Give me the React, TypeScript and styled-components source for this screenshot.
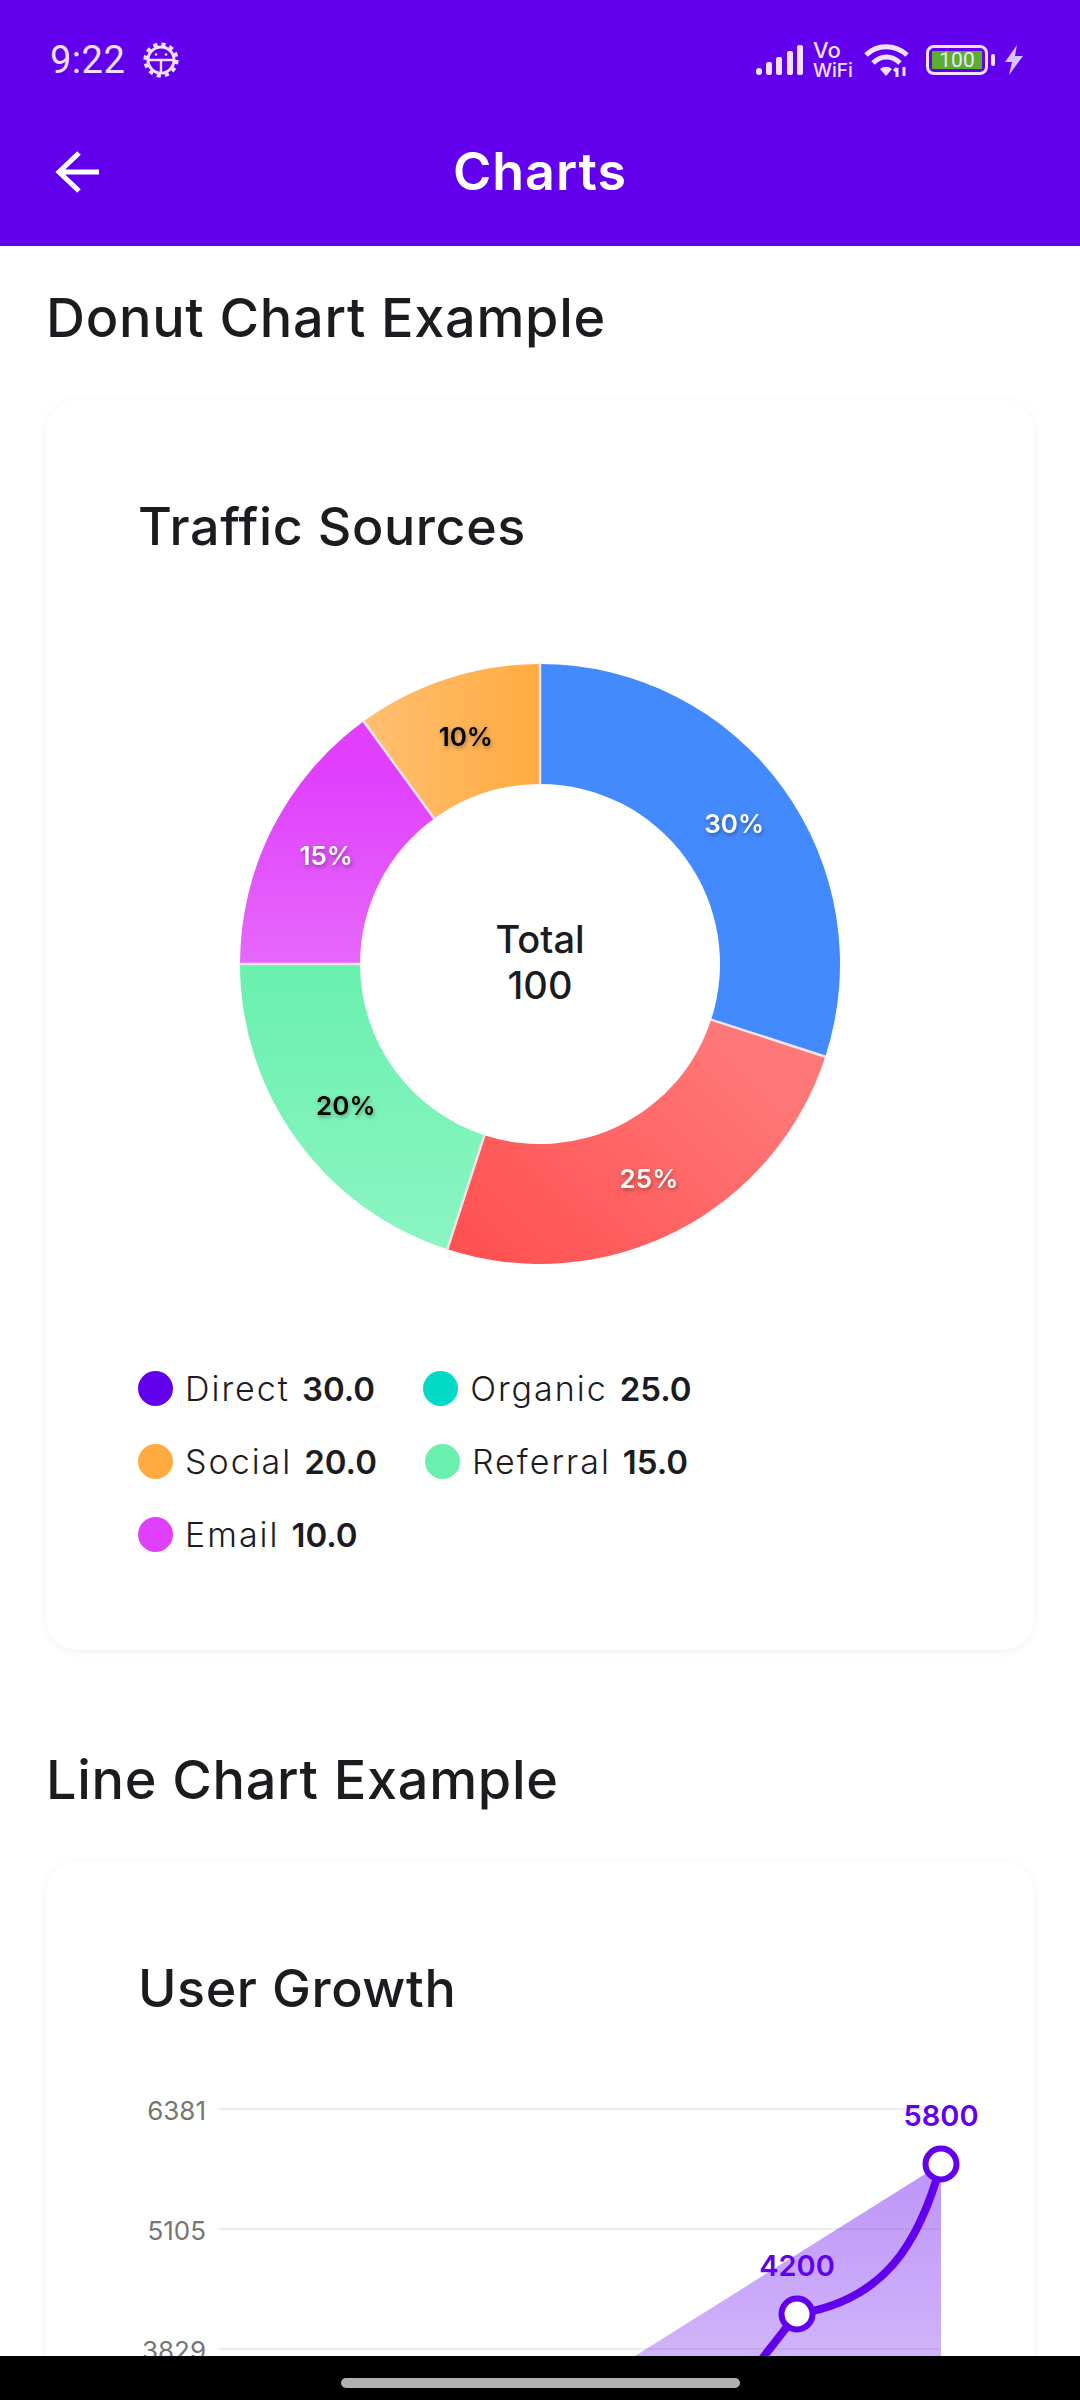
import React from 'react';
import styled, { createGlobalStyle } from 'styled-components';

const PURPLE = '#6200EE';
const INK = '#1C1B1F';

const slices = [
  { from: 0, to: 108, label: '30%', light: true, a: '#448AFF', b: '#448AFF', g: [320, 20, 620, 320] },
  { from: 108, to: 198, label: '25%', light: true, a: '#FF7878', b: '#FF5252', g: [520, 400, 300, 640] },
  { from: 198, to: 270, label: '20%', light: false, a: '#69F0AE', b: '#8CF5C2', g: [100, 320, 100, 610] },
  { from: 270, to: 324, label: '15%', light: true, a: '#E040FB', b: '#E668FC', g: [100, 130, 100, 320] },
  { from: 324, to: 360, label: '10%', light: false, a: '#FFAB40', b: '#FFBF72', g: [320, 100, 140, 100] },
];

const legend = [
  { name: 'Direct', value: '30.0', color: '#6200EE' },
  { name: 'Organic', value: '25.0', color: '#03DAC6' },
  { name: 'Social', value: '20.0', color: '#FFAB40' },
  { name: 'Referral', value: '15.0', color: '#69F0AE' },
  { name: 'Email', value: '10.0', color: '#E040FB' },
];

const polar = (r: number, deg: number) => {
  const rad = ((deg - 90) * Math.PI) / 180;
  return [320 + r * Math.cos(rad), 320 + r * Math.sin(rad)];
};

const slicePath = (from: number, to: number) => {
  const [x1, y1] = polar(300, from);
  const [x2, y2] = polar(300, to);
  const [x3, y3] = polar(180, to);
  const [x4, y4] = polar(180, from);
  const big = to - from > 180 ? 1 : 0;
  return `M${x1} ${y1}A300 300 0 ${big} 1 ${x2} ${y2}L${x3} ${y3}A180 180 0 ${big} 0 ${x4} ${y4}Z`;
};

const DonutChart = () => (
  <DonutSvg viewBox="0 0 640 640">
    <defs>
      {slices.map((s) => (
        <linearGradient
          key={s.label}
          id={`slice${s.from}`}
          gradientUnits="userSpaceOnUse"
          x1={s.g[0]}
          y1={s.g[1]}
          x2={s.g[2]}
          y2={s.g[3]}
        >
          <stop offset="0" stopColor={s.a} />
          <stop offset="1" stopColor={s.b} />
        </linearGradient>
      ))}
    </defs>
    {slices.map((s) => (
      <path key={s.label} d={slicePath(s.from, s.to)} fill={`url(#slice${s.from})`} />
    ))}
    {slices.map((s) => {
      const [x1, y1] = polar(179, s.from);
      const [x2, y2] = polar(301, s.from);
      return <line key={s.label} x1={x1} y1={y1} x2={x2} y2={y2} stroke="#F0E4EC" strokeWidth="2.5" />;
    })}
    {slices.map((s) => {
      const [x, y] = polar(240, (s.from + s.to) / 2);
      return (
        <SliceLabel key={s.label} x={x} y={y + 10} $light={s.light}>
          {s.label}
        </SliceLabel>
      );
    })}
    <CenterText x="320" y="309">Total</CenterText>
    <CenterText x="320" y="355">100</CenterText>
  </DonutSvg>
);

const LineChart = () => (
  <LineSvg viewBox="0 0 803 400">
    <defs>
      <linearGradient id="areaFill" x1="0" y1="125" x2="0" y2="360" gradientUnits="userSpaceOnUse">
        <stop offset="0" stopColor="#6200EE" stopOpacity="0.42" />
        <stop offset="1" stopColor="#6200EE" stopOpacity="0.27" />
      </linearGradient>
    </defs>
    <path d="M802 125L300 440V400H802Z" fill="url(#areaFill)" />
    {[70, 190, 310].map((y) => (
      <line key={y} x1="80" y1={y} x2="802" y2={y} stroke="#6b6b6b" strokeOpacity="0.12" strokeWidth="2" />
    ))}
    <AxisText x="67" y="81">6381</AxisText>
    <AxisText x="67" y="201">5105</AxisText>
    <AxisText x="67" y="321">3829</AxisText>
    <path
      d="M802 125C780 205 745 262 658 275M658 275L540 426"
      fill="none"
      stroke={PURPLE}
      strokeWidth="8"
    />
    <circle cx="802" cy="125" r="15.5" fill="#fff" stroke={PURPLE} strokeWidth="6" />
    <circle cx="658" cy="275" r="15.5" fill="#fff" stroke={PURPLE} strokeWidth="6" />
    <PointText x="802" y="87">5800</PointText>
    <PointText x="658" y="237">4200</PointText>
  </LineSvg>
);

const GearIcon = () => (
  <svg width="36" height="36" viewBox="0 0 36 36" fill="none" stroke="#F0E2FF">
    <circle cx="18" cy="18" r="13" strokeWidth="3" />
    <circle cx="18" cy="18" r="15.8" strokeWidth="3.6" strokeDasharray="4.2 4.07" />
    <path d="M5 18H31M18 18V31" strokeWidth="2.4" />
    <circle cx="13" cy="12.5" r="1.3" fill="#F0E2FF" stroke="none" />
    <circle cx="23" cy="12.5" r="1.3" fill="#F0E2FF" stroke="none" />
  </svg>
);

const SignalIcon = () => (
  <svg width="48" height="32" viewBox="0 0 48 32" fill="#F0E2FF">
    <rect x="0" y="24" width="6" height="7" rx="3" />
    <rect x="10" y="18" width="6" height="13" rx="2" />
    <rect x="20" y="13" width="6" height="18" rx="2" />
    <rect x="31" y="7" width="6" height="24" rx="2" />
    <rect x="41" y="1" width="6" height="30" rx="2" />
  </svg>
);

const WifiIcon = () => (
  <svg width="48" height="36" viewBox="0 0 48 36" fill="none" stroke="#F0E2FF" strokeWidth="5">
    <path d="M3 13C14 2 32 2 44 13" />
    <path d="M10 21C18 13 29 13 37 21" />
    <path d="M17 27L23 34L29 27C25 24 21 24 17 27Z" fill="#F0E2FF" stroke="none" />
    <path d="M34 35V26M31 29L34 26M41 25V34" strokeWidth="3" />
  </svg>
);

const BoltIcon = () => (
  <svg width="20" height="30" viewBox="0 0 20 30" fill="#D9C0FF">
    <path d="M13 0L1 17H8L5 30L19 11H11Z" />
  </svg>
);

const App = () => {
  return (
    <Screen>
      <GlobalStyle />
      <Header>
        <StatusBar>
          <StatusLeft>
            <Time>9:22</Time>
            <GearIcon />
          </StatusLeft>
          <StatusRight>
            <SignalIcon />
            <VoWifi>
              <VoText>Vo</VoText>
              <WifiText>WiFi</WifiText>
            </VoWifi>
            <WifiIcon />
            <Battery>
              <BatteryBody>
                <BatteryLevel>100</BatteryLevel>
              </BatteryBody>
              <BatteryCap />
            </Battery>
            <BoltIcon />
          </StatusRight>
        </StatusBar>
        <AppBar>
          <BackIcon viewBox="0 0 44 44" fill="none" stroke="#fff" strokeWidth="5">
            <path d="M44 22H4M24 3L4 22L24 41" />
          </BackIcon>
          <AppTitle>Charts</AppTitle>
        </AppBar>
      </Header>

      <MainContent>
        <SectionTitle>Donut Chart Example</SectionTitle>
        <Card>
          <CardTitle>Traffic Sources</CardTitle>
          <DonutChart />
          <Legend>
            {legend.map((item) => (
              <LegendItem key={item.name}>
                <Dot $color={item.color} />
                <LegendName>{item.name}</LegendName>
                <LegendValue>{item.value}</LegendValue>
              </LegendItem>
            ))}
          </Legend>
        </Card>

        <SectionTitle $spaced>Line Chart Example</SectionTitle>
        <Card>
          <CardTitle>User Growth</CardTitle>
          <LineChart />
        </Card>
      </MainContent>

      <NavBar>
        <NavHandle />
      </NavBar>
    </Screen>
  );
};

export default App;

// Styled Components
const GlobalStyle = createGlobalStyle`
  html, body {
    margin: 0;
    padding: 0;
    background: #fff;
  }
`;

const Screen = styled.div`
  display: flex;
  flex-direction: column;
  width: 1080px;
  height: 2400px;
  overflow: hidden;
  background: #fff;
  font-family: 'Inter', 'Liberation Sans', sans-serif;
  color: ${INK};
`;

const Header = styled.div`
  flex: none;
  background: ${PURPLE};
`;

const StatusBar = styled.div`
  display: flex;
  align-items: center;
  justify-content: space-between;
  height: 120px;
  padding: 0 56px 0 50px;
  color: #f0e2ff;
`;

const StatusLeft = styled.div`
  display: flex;
  align-items: center;
  gap: 18px;
`;

const Time = styled.span`
  font-family: 'Roboto', sans-serif;
  font-size: 38px;
  letter-spacing: 0.5px;
`;

const StatusRight = styled.div`
  display: flex;
  align-items: center;
  gap: 9px;
`;

const VoWifi = styled.div`
  display: flex;
  flex-direction: column;
  gap: 1px;
  width: 41px;
  font-family: 'Inter', sans-serif;
  font-weight: 500;
`;

const VoText = styled.span`
  font-size: 22px;
  line-height: 19px;
`;

const WifiText = styled.span`
  font-size: 19px;
  line-height: 19px;
`;

const Battery = styled.div`
  display: flex;
  align-items: center;
  gap: 3px;
  margin-left: 6px;
`;

const BatteryBody = styled.div`
  display: flex;
  width: 62px;
  height: 30px;
  padding: 3px;
  box-sizing: border-box;
  border: 3px solid #f0e2ff;
  border-radius: 8px;
`;

const BatteryLevel = styled.span`
  flex: 1;
  background: #5aaf2e;
  font-family: 'Roboto', sans-serif;
  font-size: 21px;
  line-height: 18px;
  text-align: center;
  color: #f0e2ff;
`;

const BatteryCap = styled.span`
  width: 4px;
  height: 12px;
  border-radius: 2px;
  background: #f0e2ff;
`;

const AppBar = styled.div`
  position: relative;
  display: flex;
  align-items: center;
  justify-content: center;
  height: 102px;
  padding-bottom: 24px;
`;

const BackIcon = styled.svg`
  position: absolute;
  left: 55px;
  top: 30px;
  width: 44px;
  height: 44px;
`;

const AppTitle = styled.h1`
  margin: 0;
  font-size: 52px;
  font-weight: 600;
  letter-spacing: 1px;
  color: #fff;
`;

const MainContent = styled.div`
  flex: 1;
  min-height: 0;
  overflow: hidden;
  padding: 37px 46px 0;
`;

const SectionTitle = styled.h2<{ $spaced?: boolean }>`
  margin: ${(p) => (p.$spaced ? '95px' : '0')} 0 46px;
  font-size: 54px;
  font-weight: 500;
  letter-spacing: 0.7px;
  line-height: 70px;
`;

const Card = styled.div`
  box-sizing: border-box;
  padding: 93px 92px 98px;
  border-radius: 32px;
  background: #fff;
  box-shadow: 0 2px 10px rgba(0, 0, 0, 0.06);
`;

const CardTitle = styled.h3`
  margin: 0;
  font-size: 52px;
  font-weight: 500;
  letter-spacing: 0.6px;
  line-height: 70px;
`;

const DonutSvg = styled.svg`
  display: block;
  width: 640px;
  height: 640px;
  margin: 82px auto 87px;
`;

const SliceLabel = styled.text<{ $light: boolean }>`
  font-size: 26px;
  font-weight: 600;
  text-anchor: middle;
  fill: ${(p) => (p.$light ? '#fff' : '#000')};
  filter: drop-shadow(1px 2px 2px rgba(0, 0, 0, 0.35));
`;

const CenterText = styled.text`
  font-size: 38px;
  font-weight: 500;
  text-anchor: middle;
  fill: ${INK};
`;

const Legend = styled.div`
  display: flex;
  flex-wrap: wrap;
  gap: 38px 48px;
`;

const LegendItem = styled.div`
  display: flex;
  align-items: center;
  height: 35px;
`;

const Dot = styled.span<{ $color: string }>`
  width: 35px;
  height: 35px;
  margin-right: 12px;
  border-radius: 50%;
  background: ${(p) => p.$color};
`;

const LegendName = styled.span`
  margin-right: 12px;
  font-size: 34px;
  font-weight: 300;
  letter-spacing: 2px;
`;

const LegendValue = styled.span`
  font-size: 33px;
  font-weight: 600;
`;

const LineSvg = styled.svg`
  display: block;
  width: 803px;
  height: 400px;
  margin: 15px 0 0 1px;
  overflow: visible;
`;

const AxisText = styled.text`
  font-size: 26px;
  text-anchor: end;
  fill: #757575;
`;

const PointText = styled.text`
  font-size: 29px;
  font-weight: 600;
  text-anchor: middle;
  fill: ${PURPLE};
`;

const NavBar = styled.div`
  flex: none;
  display: flex;
  justify-content: center;
  align-items: center;
  height: 44px;
  background: #000;
`;

const NavHandle = styled.div`
  width: 399px;
  height: 10px;
  margin-top: 10px;
  border-radius: 5px;
  background: #b0b0b0;
`;
